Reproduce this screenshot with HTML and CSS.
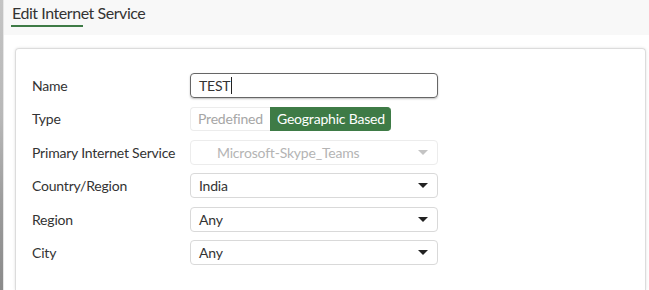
FILE: index.html
```html
<!DOCTYPE html>
<html>
<head>
<meta charset="utf-8">
<link rel="stylesheet" href="styles.css">
</head>
<body>
<div class="app">
  <div class="edge"></div>
  <div class="main">
    <div class="header"><span class="title">Edit Internet Service</span></div>
    <div class="card">
      <div class="form">
        <div class="label">Name</div>
        <div class="field"><div class="input focused">TEST<span class="caret"></span></div></div>

        <div class="label">Type</div>
        <div class="field">
          <div class="seg">
            <span class="opt">Predefined</span>
            <span class="opt active">Geographic Based</span>
          </div>
        </div>

        <div class="label">Primary Internet Service</div>
        <div class="field"><div class="input select disabled"><span class="val indent">Microsoft-Skype_Teams</span><span class="arrow"></span></div></div>

        <div class="label">Country/Region</div>
        <div class="field"><div class="input select"><span class="val">India</span><span class="arrow"></span></div></div>

        <div class="label">Region</div>
        <div class="field"><div class="input select"><span class="val">Any</span><span class="arrow"></span></div></div>

        <div class="label">City</div>
        <div class="field"><div class="input select"><span class="val">Any</span><span class="arrow"></span></div></div>
      </div>
    </div>
  </div>
</div>
</body>
</html>
```
FILE: styles.css
```css
html, body {
  margin: 0;
  padding: 0;
  background: #fff;
  font-family: Lato, "Open Sans", sans-serif;
  color: #333;
  overflow: hidden;
}
.app {
  display: flex;
  width: 649px;
  height: 290px;
}
.edge {
  width: 3px;
  flex: none;
  background: linear-gradient(#c4c4c4 0, #b8b8b8 40%, #9c9c9c 70%, #8a8a8a 100%);
  border-right: 1px solid #e6e6e6;
}
.main {
  flex: 1;
  display: flex;
  flex-direction: column;
}
.header {
  height: 35px;
  background: #f8f8f8;
  padding-left: 8px;
  box-sizing: border-box;
}
.title {
  position: relative;
  display: inline-block;
  font-size: 16px;
  letter-spacing: -0.45px;
  line-height: 20px;
  padding-top: 3px;
  padding-bottom: 4px;
  color: #333;
}
.title::after {
  content: "";
  position: absolute;
  left: -1px;
  bottom: 0;
  width: 72px;
  height: 2px;
  background: #3e7b46;
}
.card {
  margin: 13px 3px 0 11px;
  flex: 1;
  border: 1px solid #dcdcdc;
  border-bottom: none;
  border-radius: 4px 4px 0 0;
  box-shadow: 0 0 3px rgba(0,0,0,0.12);
  padding: 24px 16px 0 16px;
}
.form {
  display: grid;
  grid-template-columns: 158px 248px;
  grid-auto-rows: 25px;
  row-gap: 8.4px;
  align-items: center;
}
.label {
  font-size: 14px;
  letter-spacing: -0.2px;
  color: #333;
}
.field {
  height: 100%;
  display: flex;
  align-items: center;
}
.input {
  box-sizing: border-box;
  width: 248px;
  height: 25px;
  border: 1px solid #d9d9d9;
  border-radius: 4px;
  font-size: 14px;
  letter-spacing: -0.2px;
  line-height: 23px;
  padding: 0 8px;
  display: flex;
  align-items: center;
  color: #333;
}
.focused {
  border-color: #666;
  box-shadow: 0 1px 2px rgba(0,0,0,0.25);
}
.caret {
  display: inline-block;
  width: 1px;
  height: 17px;
  background: #222;
  margin-left: 1px;
}
.select .val {
  flex: 1;
}
.select .indent {
  padding-left: 18px;
}
.arrow {
  width: 0;
  height: 0;
  border-left: 5px solid transparent;
  border-right: 5px solid transparent;
  border-top: 5px solid #222;
  margin-right: 1px;
}
.disabled {
  border-color: #ececec;
  color: #b4b4b4;
}
.disabled .arrow {
  border-top-color: #c4c4c4;
}
.seg {
  display: flex;
  height: 24px;
  font-size: 14px;
  letter-spacing: -0.2px;
}
.opt {
  box-sizing: border-box;
  height: 24px;
  line-height: 22px;
  padding: 0 7px;
  border: 1px solid #ececec;
  color: #a6a6a6;
  border-radius: 4px 0 0 4px;
  border-right: none;
}
.opt.active {
  padding: 0 6px;
  background: #3e7b46;
  border-color: #3e7b46;
  color: #fff;
  border-radius: 0 4px 4px 0;
}
```
